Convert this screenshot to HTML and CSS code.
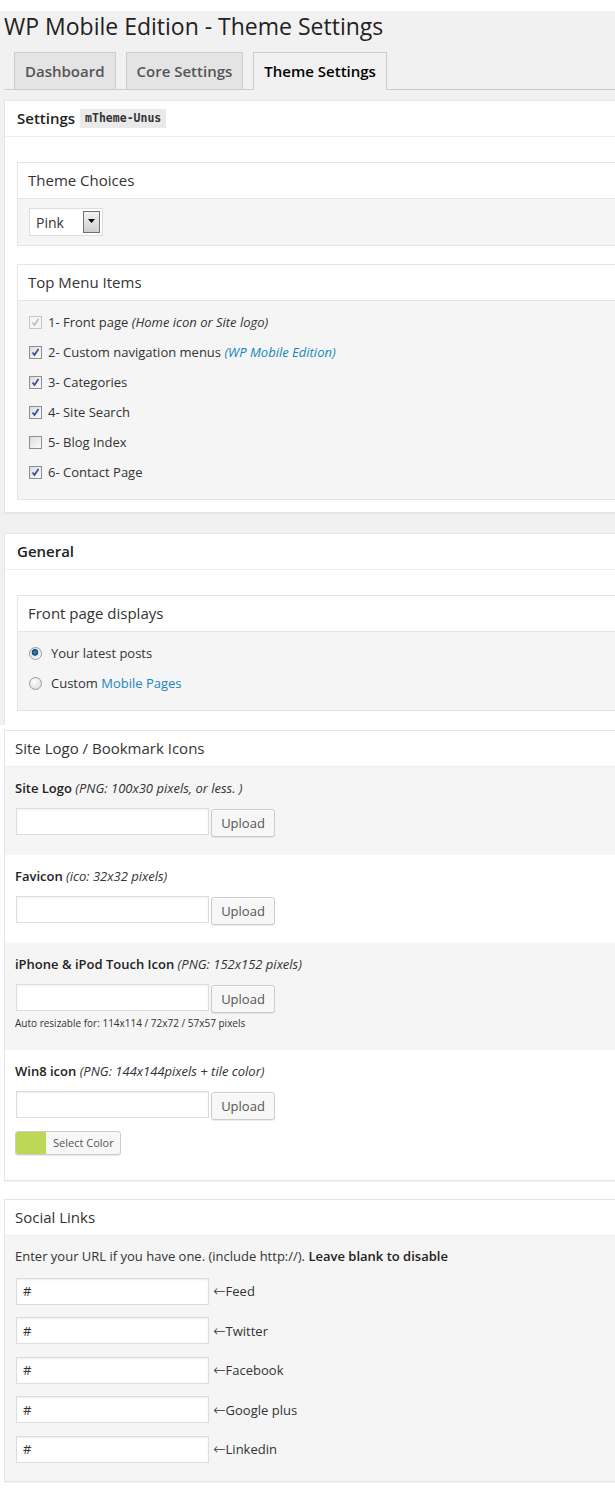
FILE: index.html
```html
<!DOCTYPE html>
<html lang="en">
<head>
<meta charset="utf-8">
<title>WP Mobile Edition - Theme Settings</title>
<link rel="stylesheet" href="styles.css">
</head>
<body>
<div class="wrap">
  <div class="upper">
    <h2 class="title">WP Mobile Edition - Theme Settings</h2>
    <nav class="tabs">
      <a class="tab">Dashboard</a>
      <a class="tab">Core Settings</a>
      <a class="tab active">Theme Settings</a>
    </nav>

    <section class="box">
      <div class="box-head strong">Settings <code class="code">mTheme-Unus</code></div>
      <div class="box-body">
        <div class="inner">
          <div class="inner-head">Theme Choices</div>
          <div class="inner-body">
            <div class="select"><span>Pink</span><span class="select-arrow"><svg width="7" height="4" viewBox="0 0 7 4"><path d="M0 0h7L3.5 4z" fill="#000"/></svg></span></div>
          </div>
        </div>
        <div class="inner gap">
          <div class="inner-head">Top Menu Items</div>
          <ul class="choices">
            <li><span class="cb disabled"><svg width="9" height="9" viewBox="0 0 9 9"><path d="M1.5 4.5l2 2.5 4-6" fill="none" stroke="#b8b8b8" stroke-width="1.4"/></svg></span>1- Front page&nbsp;<em>(Home icon or Site logo)</em></li>
            <li><span class="cb"><svg width="9" height="9" viewBox="0 0 9 9"><path d="M1.5 4.5l2 2.5 4-6" fill="none" stroke="#3f4f9a" stroke-width="1.8"/></svg></span>2- Custom navigation menus&nbsp;<em class="link">(WP Mobile Edition)</em></li>
            <li><span class="cb"><svg width="9" height="9" viewBox="0 0 9 9"><path d="M1.5 4.5l2 2.5 4-6" fill="none" stroke="#3f4f9a" stroke-width="1.8"/></svg></span>3- Categories</li>
            <li><span class="cb"><svg width="9" height="9" viewBox="0 0 9 9"><path d="M1.5 4.5l2 2.5 4-6" fill="none" stroke="#3f4f9a" stroke-width="1.8"/></svg></span>4- Site Search</li>
            <li><span class="cb"></span>5- Blog Index</li>
            <li><span class="cb"><svg width="9" height="9" viewBox="0 0 9 9"><path d="M1.5 4.5l2 2.5 4-6" fill="none" stroke="#3f4f9a" stroke-width="1.8"/></svg></span>6- Contact Page</li>
          </ul>
        </div>
      </div>
    </section>

    <section class="box box-open">
      <div class="box-head strong">General</div>
      <div class="box-body body-open">
        <div class="inner">
          <div class="inner-head">Front page displays</div>
          <ul class="choices">
            <li><span class="radio checked"></span>Your latest posts</li>
            <li><span class="radio"></span>Custom&nbsp;<span class="link">Mobile Pages</span></li>
          </ul>
        </div>
      </div>
    </section>
  </div>

  <div class="lower">
    <section class="box">
      <div class="box-head plain">Site Logo / Bookmark Icons</div>
      <div class="field shade">
        <div class="label"><b>Site Logo</b> <em>(PNG: 100x30 pixels, or less. )</em></div>
        <div class="upload-row"><input class="text-input" type="text" value=""><button class="btn">Upload</button></div>
      </div>
      <div class="field">
        <div class="label"><b>Favicon</b> <em>(ico: 32x32 pixels)</em></div>
        <div class="upload-row"><input class="text-input" type="text" value=""><button class="btn">Upload</button></div>
      </div>
      <div class="field shade">
        <div class="label"><b>iPhone &amp; iPod Touch Icon</b> <em>(PNG: 152x152 pixels)</em></div>
        <div class="upload-row"><input class="text-input" type="text" value=""><button class="btn">Upload</button></div>
        <div class="note">Auto resizable for: 114x114 / 72x72 / 57x57 pixels</div>
      </div>
      <div class="field last">
        <div class="label"><b>Win8 icon</b> <em>(PNG: 144x144pixels + tile color)</em></div>
        <div class="upload-row"><input class="text-input" type="text" value=""><button class="btn">Upload</button></div>
        <button class="color-btn"><span class="swatch"></span><span class="color-text">Select Color</span></button>
      </div>
    </section>

    <section class="box gap">
      <div class="box-head plain">Social Links</div>
      <div class="social">
        <p class="intro">Enter your URL if you have one. (include http://). <b>Leave blank to disable</b></p>
        <div class="social-list">
          <div class="social-row"><input class="text-input" type="text" value="#"><span class="social-label"><span class="arrow">←</span>Feed</span></div>
          <div class="social-row"><input class="text-input" type="text" value="#"><span class="social-label"><span class="arrow">←</span>Twitter</span></div>
          <div class="social-row"><input class="text-input" type="text" value="#"><span class="social-label"><span class="arrow">←</span>Facebook</span></div>
          <div class="social-row"><input class="text-input" type="text" value="#"><span class="social-label"><span class="arrow">←</span>Google plus</span></div>
          <div class="social-row"><input class="text-input" type="text" value="#"><span class="social-label"><span class="arrow">←</span>Linkedin</span></div>
        </div>
      </div>
    </section>
  </div>
</div>
</body>
</html>
```

FILE: styles.css
```css
html {
  overflow-x: hidden;
  background: #fff;
}

body {
  margin: 0;
  background: #fff;
  font-family: "Open Sans", "Liberation Sans", sans-serif;
  font-size: 13px;
  color: #333;
}

.wrap {
  margin-right: -40px;
}

.upper {
  background: #f1f1f1;
  padding-left: 4px;
}

.title {
  margin: 11px 0 0;
  font-size: 23px;
  line-height: 30px;
  font-weight: 400;
  color: #222;
}

.tabs {
  display: flex;
  align-items: flex-end;
  gap: 10px;
  margin: 11px 0 10px;
  padding-left: 10px;
  border-bottom: 1px solid #ccc;
}

.tab {
  display: block;
  padding: 6px 10px;
  border: 1px solid #ccc;
  border-bottom: 0;
  background: #e4e4e4;
  color: #555;
  font-size: 15px;
  line-height: 24px;
  font-weight: 600;
}

.tab.active {
  background: #f1f1f1;
  color: #000;
  padding-bottom: 7px;
  margin-bottom: -1px;
}

.box {
  background: #fff;
  border: 1px solid #e5e5e5;
  box-shadow: 0 1px 1px rgba(0, 0, 0, 0.04);
}

.box + .box {
  margin-top: 20px;
}

.box.gap {
  margin-top: 18px;
}

.box-open {
  border-bottom: 0;
  box-shadow: none;
}

.box-head {
  height: 35px;
  line-height: 35px;
  border-bottom: 1px solid #eee;
  font-size: 15px;
  display: flex;
  align-items: center;
}

.box-head.strong {
  padding-left: 12px;
  font-weight: 600;
  color: #222;
}

.box-head.plain {
  padding-left: 10px;
  color: #333;
}

.code {
  margin-left: 5px;
  padding: 3px 5px;
  line-height: 13px;
  background: #eaeaea;
  font-family: "DejaVu Sans Mono", "Liberation Mono", monospace;
  font-size: 11.5px;
  font-weight: 700;
  color: #333;
}

.box-body {
  padding: 25px 12px 12px;
}

.body-open {
  padding-bottom: 14px;
}

.inner {
  border: 1px solid #e5e5e5;
  background: #fff;
}

.inner.gap {
  margin-top: 18px;
}

.inner-head {
  height: 35px;
  line-height: 35px;
  padding-left: 10px;
  font-size: 15px;
  color: #333;
  border-bottom: 1px solid #e5e5e5;
}

.inner-body {
  background: #f5f5f5;
  padding: 9px 11px;
}

.select {
  display: flex;
  align-items: center;
  box-sizing: border-box;
  width: 74px;
  height: 28px;
  border: 1px solid #ddd;
  background: #fff;
  padding-left: 6px;
  font-size: 14px;
  color: #333;
}

.select-arrow {
  margin-left: auto;
  margin-right: 2px;
  box-sizing: border-box;
  width: 17px;
  height: 22px;
  border: 1px solid #707070;
  background: linear-gradient(#f2f2f2, #cfcfcf);
  display: flex;
  align-items: center;
  justify-content: center;
  padding-bottom: 2px;
}

.choices {
  list-style: none;
  margin: 0;
  padding: 6px 11px 12px;
  background: #f5f5f5;
}

.choices li {
  display: flex;
  align-items: center;
  height: 30px;
  font-size: 13px;
  color: #333;
}

.link {
  color: #1a86bd;
}

.cb {
  box-sizing: border-box;
  width: 13px;
  height: 13px;
  margin-right: 6px;
  border: 1px solid #8f8f8f;
  background: linear-gradient(135deg, #dcdcdc, #fdfdfd);
  display: flex;
  align-items: center;
  justify-content: center;
}

.cb.disabled {
  border-color: #c6c6c6;
  background: #f4f4f4;
}

.radio {
  box-sizing: border-box;
  width: 13px;
  height: 13px;
  margin-right: 9px;
  border: 1px solid #9a9a9a;
  border-radius: 50%;
  background: radial-gradient(circle at 40% 35%, #fff, #d6d6d6);
}

.radio.checked {
  background: radial-gradient(circle at 45% 40%, #3a9ad0 0, #0d4f7e 2.5px, #0d4f7e 3px, #e2e2e2 3.6px, #f6f6f6 6px);
}

.lower {
  background: #fff;
  padding: 5px 0 10px 4px;
}

.field {
  padding: 11px 10px 18px;
  background: #fff;
}

.field.shade {
  background: #f5f5f5;
}

.field.last {
  padding-bottom: 25px;
}

.label {
  line-height: 20px;
  font-size: 13px;
  color: #333;
}

.label b {
  font-weight: 600;
  color: #222;
}

.upload-row {
  display: flex;
  align-items: flex-start;
  margin-top: 10px;
}

.text-input {
  box-sizing: border-box;
  width: 193px;
  height: 27px;
  margin: 0 0 0 1px;
  padding: 0 6px;
  border: 1px solid #ddd;
  box-shadow: inset 0 1px 2px rgba(0, 0, 0, 0.07);
  background: #fff;
  font-family: "Open Sans", "Liberation Sans", sans-serif;
  font-size: 13px;
  color: #333;
  outline: none;
}

.btn {
  box-sizing: border-box;
  width: 64px;
  height: 28px;
  margin: 1px 0 0 2px;
  padding: 0;
  border: 1px solid #ccc;
  border-radius: 3px;
  background: #f7f7f7;
  box-shadow: inset 0 1px 0 #fff, 0 1px 0 rgba(0, 0, 0, 0.08);
  font-family: "Open Sans", "Liberation Sans", sans-serif;
  font-size: 13px;
  color: #555;
}

.note {
  margin: 3px 0 2px;
  font-size: 10px;
  line-height: 14px;
  color: #333;
}

.color-btn {
  display: flex;
  align-items: stretch;
  box-sizing: border-box;
  height: 24px;
  width: 106px;
  margin-top: 11px;
  padding: 0;
  border: 1px solid #ccc;
  border-radius: 3px;
  background: #f7f7f7;
  box-shadow: 0 1px 0 rgba(0, 0, 0, 0.08);
  overflow: hidden;
}

.swatch {
  width: 30px;
  background: #bcd856;
}

.color-text {
  padding-left: 7px;
  line-height: 22px;
  font-family: "Open Sans", "Liberation Sans", sans-serif;
  font-size: 11px;
  color: #555;
}

.social {
  background: #f5f5f5;
  padding: 10px 10px 18px;
}

.intro {
  margin: 0;
  line-height: 20px;
  font-size: 13px;
  color: #333;
}

.intro b {
  font-weight: 600;
  color: #222;
}

.social-list {
  display: flex;
  flex-direction: column;
  gap: 12.5px;
  margin-top: 11.5px;
}

.social-row {
  display: flex;
  align-items: center;
}

.social-label {
  margin-left: 4px;
  font-size: 13px;
  color: #333;
}

.arrow {
  font-family: "DejaVu Sans", sans-serif;
  font-size: 15px;
  font-weight: 200;
  line-height: 1;
}
```
